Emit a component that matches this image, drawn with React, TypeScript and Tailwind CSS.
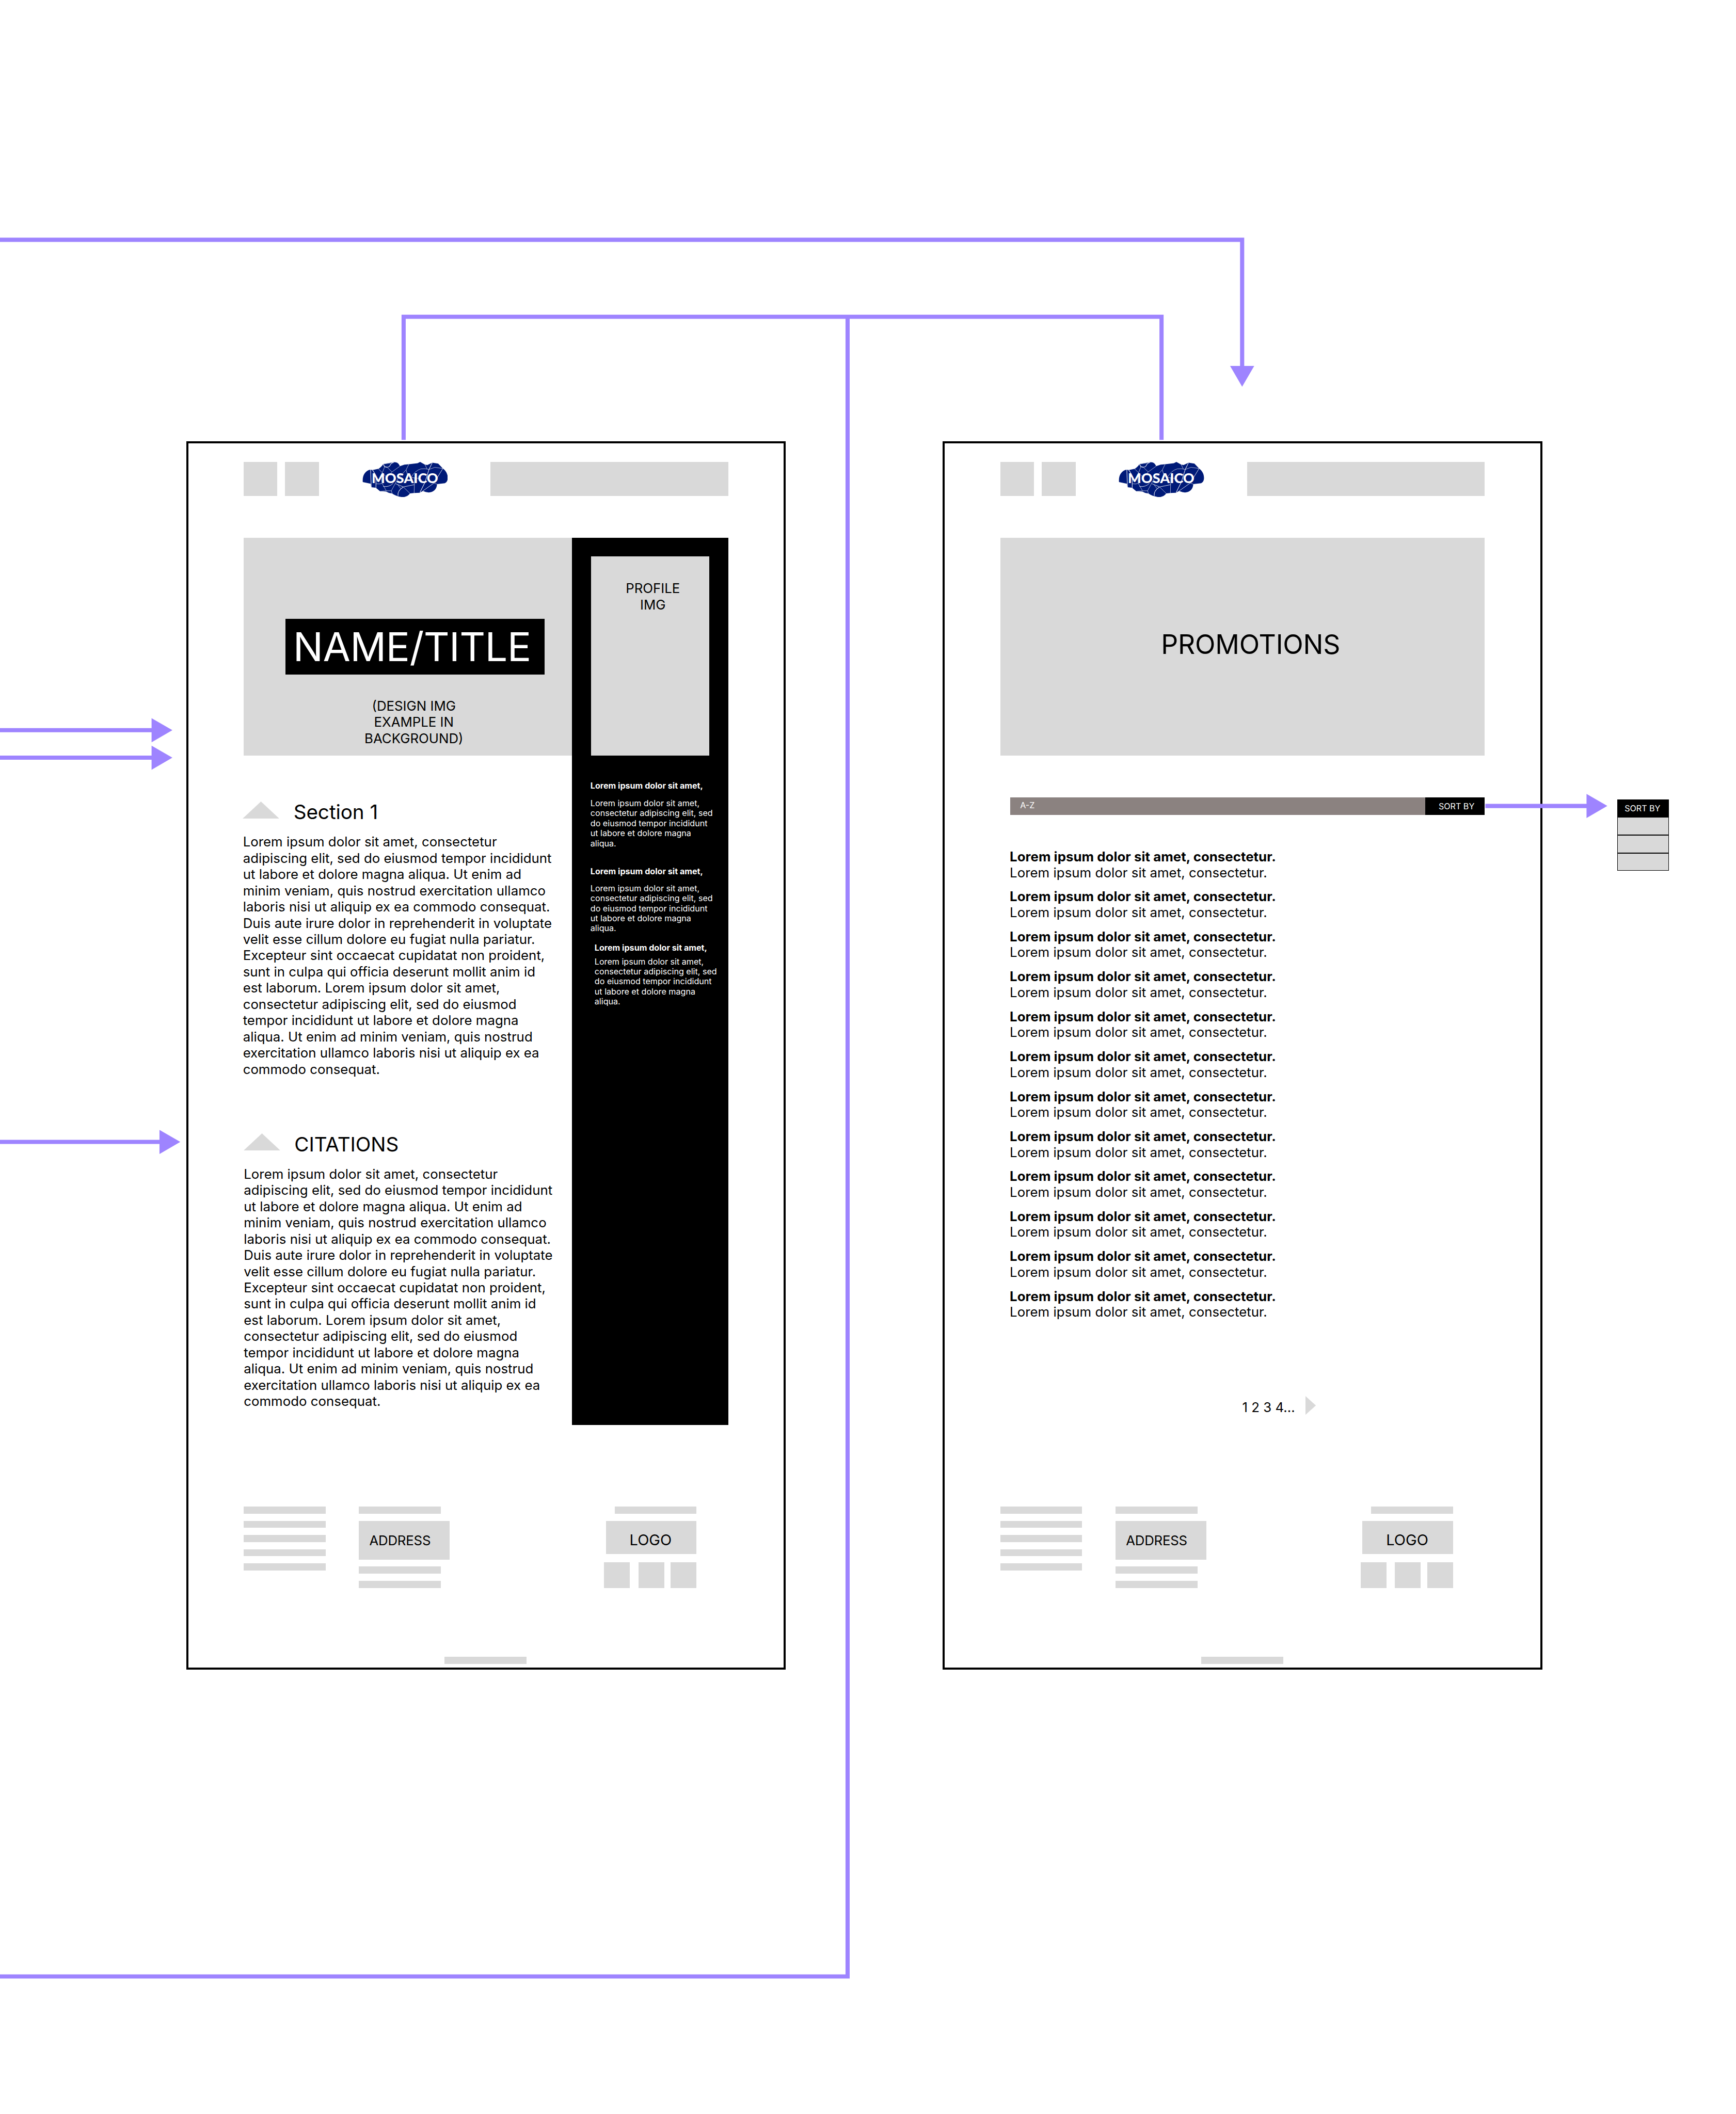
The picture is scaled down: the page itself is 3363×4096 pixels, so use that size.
import React from "react";

const BODY = [
  "Lorem ipsum dolor sit amet, consectetur",
  "adipiscing elit, sed do eiusmod tempor incididunt",
  "ut labore et dolore magna aliqua. Ut enim ad",
  "minim veniam, quis nostrud exercitation ullamco",
  "laboris nisi ut aliquip ex ea commodo consequat.",
  "Duis aute irure dolor in reprehenderit in voluptate",
  "velit esse cillum dolore eu fugiat nulla pariatur.",
  "Excepteur sint occaecat cupidatat non proident,",
  "sunt in culpa qui officia deserunt mollit anim id",
  "est laborum. Lorem ipsum dolor sit amet,",
  "consectetur adipiscing elit, sed do eiusmod",
  "tempor incididunt ut labore et dolore magna",
  "aliqua. Ut enim ad minim veniam, quis nostrud",
  "exercitation ullamco laboris nisi ut aliquip ex ea",
  "commodo consequat.",
].join("\n");

const NOTE = [
  "Lorem ipsum dolor sit amet,",
  "consectetur adipiscing elit, sed",
  "do eiusmod tempor incididunt",
  "ut labore et dolore magna",
  "aliqua.",
].join("\n");

function Logo() {
  return (
    <svg viewBox="90 58 615 254" className="-mt-0.5 ml-104 h-84.75 w-205 shrink-0" aria-label="Mosaico">
      <path
        fill="#001a78"
        d="M93 203 C88 155 112 120 148 114 L163 116 L207 107 Q226 96 241 73 L310 61 C338 56 352 68 360 89 L393 77 L425 75 L488 67 L506 58 L541 77 L558 80 L594 63 L636 70 L670 105 C696 124 706 150 705 176 C704 198 694 207 684 211 L628 218 C626 255 602 277 568 278 Q545 276 526 267 L502 280 L462 282 L433 285 C420 303 402 311 380 312 C350 308 325 300 304 285 Q284 286 262 272 L218 270 L187 244 L154 240 L150 215 Z"
      />
      <g fill="none" stroke="#e9ecf8" strokeWidth="2.6">
        <path d="M149 114 L154 240" strokeWidth="4" />
        <path d="M163 116 Q182 140 188 175 L188 244" strokeWidth="4" />
        <path d="M205 107 L262 165" />
        <path d="M241 73 L250 94 L233 138 Q222 175 232 212 L262 266" />
        <path d="M241 73 C248 100 275 102 288 86 Q296 66 318 61" strokeWidth="4" />
        <path d="M250 94 H266 L303 130 L360 89" />
        <path d="M241 73 L310 63" />
        <path d="M303 130 L285 150" />
        <path d="M425 75 L405 115 L345 180 L299 265 L304 285" />
        <path d="M405 115 L418 160 L440 170" />
        <path d="M440 170 Q470 120 512 108 Q545 104 570 112 L612 97 L670 105" />
        <path d="M541 77 L556 108" />
        <path d="M594 63 L570 112 L541 205 L505 277" strokeWidth="4" />
        <path d="M670 105 L606 210 L526 267" strokeWidth="3.4" />
        <path d="M606 210 L628 218" />
        <path d="M188 215 Q215 220 232 212" />
        <path d="M240 235 Q285 240 312 212" strokeWidth="3.4" />
        <path d="M262 266 H299" />
        <path d="M218 270 L262 266" />
        <path d="M330 215 L385 238 L464 222" strokeWidth="3.4" />
        <path d="M345 222 L365 248" />
        <path d="M385 238 C358 255 342 275 347 302" strokeWidth="4" />
        <path d="M385 238 L433 285" />
        <path d="M466 170 L463 282" />
        <path d="M440 170 L490 176 L520 190" />
      </g>
      <text
        x="157"
        y="209"
        fill="#ffffff"
        fontFamily="Lato, sans-serif"
        fontWeight="900"
        fontSize="97"
        textLength="479"
        lengthAdjust="spacingAndGlyphs"
      >
        MOSAICO
      </text>
    </svg>
  );
}

function Header() {
  return (
    <header className="ml-133 flex h-81 shrink-0 items-start">
      <div className="h-81 w-81 bg-[#d9d9d9]" />
      <div className="ml-19 h-81 w-81 bg-[#d9d9d9]" />
      <Logo />
      <div className="ml-103 h-81 w-571 bg-[#d9d9d9]" />
    </header>
  );
}

function Bar() {
  return <div className="h-17 w-197 shrink-0 bg-[#d9d9d9]" />;
}

function Footer() {
  return (
    <footer className="mt-auto h-386 shrink-0">
      <div className="ml-133 flex h-361 items-start">
        <div className="flex flex-col gap-17">
          <Bar />
          <Bar />
          <Bar />
          <Bar />
          <Bar />
        </div>
        <div className="ml-80 flex w-218 flex-col gap-17">
          <Bar />
          <div className="flex h-93 items-center bg-[#d9d9d9] pt-2 pl-25 text-[25.81px] leading-39 tracking-[-0.2px]">
            ADDRESS
          </div>
          <Bar />
          <Bar />
        </div>
        <div className="ml-371 flex w-222 flex-col items-end">
          <Bar />
          <div className="mt-17 flex h-80 w-218 items-center bg-[#d9d9d9] pt-12 pl-57 text-[29.04px] leading-44">
            LOGO
          </div>
          <div className="mt-19 flex w-222 items-start">
            <div className="h-62 w-62 bg-[#d9d9d9]" />
            <div className="mt-1 ml-20 h-62 w-62 bg-[#d9d9d9]" />
            <div className="ml-16 h-62 w-62 bg-[#d9d9d9]" />
          </div>
        </div>
      </div>
      <div className="ml-616">
        <Bar />
      </div>
    </footer>
  );
}

function Section({ title, className }: { title: string; className: string }) {
  return (
    <section className={className}>
      <div className="flex h-58 items-start">
        <svg viewBox="0 0 88 41" className="mt-3.5 h-41 w-88 shrink-0">
          <path d="M44 0 L88 41 H0 Z" fill="#d9d9d9" />
        </svg>
        <h2 className="ml-34 text-[38.72px] leading-58 tracking-[-0.1px] whitespace-nowrap">{title}</h2>
      </div>
      <p className="mt-23 ml-0.5 text-[25.81px] leading-39 tracking-[0.02px] whitespace-pre">{BODY}</p>
    </section>
  );
}

function Note({ className, bodyClass }: { className: string; bodyClass: string }) {
  return (
    <div className={className}>
      <h3 className="text-[16.13px] leading-24 font-bold whitespace-nowrap">Lorem ipsum dolor sit amet,</h3>
      <p className={bodyClass}>{NOTE}</p>
    </div>
  );
}

function ProfileFrame() {
  return (
    <div className="absolute top-1060 left-447 flex h-2950 w-1440 flex-col border-4 border-black pt-45">
      <Header />
      <div className="mt-101 ml-133 flex items-start">
        <div className="w-789">
          <div className="h-523 bg-[#d9d9d9] pt-195">
            <div className="ml-100 flex h-133 w-623 items-center bg-black pt-1 pl-19 text-[77.44px] leading-116 tracking-[-0.65px] whitespace-nowrap text-white">
              NAME/TITLE
            </div>
            <p className="mt-56 ml-200 w-418 text-center text-[25.81px] leading-39">
              (DESIGN IMG
              <br />
              EXAMPLE IN
              <br />
              BACKGROUND)
            </p>
          </div>
          <Section title="Section 1" className="mt-106.5 -ml-2" />
          <Section title="CITATIONS" className="mt-132" />
        </div>
        <aside className="h-2131 w-375 bg-black px-45 pt-45 text-white">
          <div className="h-478 w-285 bg-[#d9d9d9] pt-57 pl-13 text-center text-[25.81px] leading-39 text-black">
            PROFILE
            <br />
            IMG
          </div>
          <Note className="mt-61 -ml-1" bodyClass="mt-18 text-[16.13px] leading-24 whitespace-pre" />
          <Note className="mt-43 -ml-1" bodyClass="mt-17.5 text-[16.13px] leading-24 whitespace-pre" />
          <Note className="mt-22.5 ml-9" bodyClass="mt-9 text-[16.13px] leading-24 whitespace-pre" />
        </aside>
      </div>
      <Footer />
    </div>
  );
}

function PromotionsFrame() {
  return (
    <div className="absolute top-1060 left-2264 flex h-2950 w-1440 flex-col border-4 border-black pt-45">
      <Header />
      <div className="mt-101 ml-133 w-1164">
        <div className="h-523 bg-[#d9d9d9] pt-217 pl-386.5">
          <h1 className="text-[51.63px] leading-77 tracking-[-0.2px] whitespace-nowrap">PROMOTIONS</h1>
        </div>
        <div className="mt-100 ml-24 flex h-43 text-[16.13px] leading-24 text-white">
          <div className="w-997 bg-[#8b8280] pt-7.5 pl-24">A-Z</div>
          <div className="w-143 bg-black pt-10.5 pl-32 whitespace-nowrap">SORT BY</div>
        </div>
        <ul className="mt-81.25 ml-23 flex flex-col gap-20 text-[25.81px] leading-38 tracking-[0.04px] whitespace-nowrap">
          {Array.from({ length: 12 }, (_, i) => (
            <li key={i}>
              <p className="font-bold">Lorem ipsum dolor sit amet, consectetur.</p>
              <p>Lorem ipsum dolor sit amet, consectetur.</p>
            </li>
          ))}
        </ul>
        <div className="mt-181.75 ml-581.5 flex items-start">
          <span className="mt-8 w-151.5 text-[25.81px] leading-39 whitespace-nowrap">1 2 3 4...</span>
          <svg viewBox="0 0 25 45" className="h-45 w-25">
            <path d="M0 0 L25 22.5 L0 45 Z" fill="#d9d9d9" />
          </svg>
        </div>
      </div>
      <Footer />
    </div>
  );
}

function SortMenu() {
  return (
    <div className="absolute top-1920 left-3884 w-124">
      <div className="h-43 bg-black pt-10.5 pl-17.5 text-[16.13px] leading-24 whitespace-nowrap text-white">SORT BY</div>
      <div className="h-43 border border-black bg-[#d9d9d9]" />
      <div className="h-43 border border-black bg-[#d9d9d9]" />
      <div className="h-43 border border-black bg-[#d9d9d9]" />
    </div>
  );
}

function Connectors() {
  return (
    <svg viewBox="0 0 4169 5078" preserveAspectRatio="none" className="absolute inset-0 h-full w-full">
      <g fill="none" stroke="#9e84ff" strokeWidth="10">
        <path d="M0 576 H2983 V880" />
        <path d="M969.3 1056.5 V761 H2789.4 V1056.5" />
        <path d="M2035.5 761 V4747.5 H0" />
        <path d="M0 1754 H365" />
        <path d="M0 1820 H365" />
        <path d="M0 2743 H384" />
        <path d="M3567 1936 H3811" />
      </g>
      <g fill="#9e84ff">
        <path d="M2954 879 H3012 L2983 929 Z" />
        <path d="M364 1725 L414 1754 L364 1783 Z" />
        <path d="M364 1791 L414 1820 L364 1849 Z" />
        <path d="M383 2714 L433 2743 L383 2772 Z" />
        <path d="M3810 1907 L3860 1936 L3810 1965 Z" />
      </g>
    </svg>
  );
}

export default function App() {
  return (
    <main className="relative h-[4096px] w-[3363px] overflow-hidden bg-white font-['Inter',sans-serif] text-black [--spacing:0.80665px]">
      <ProfileFrame />
      <PromotionsFrame />
      <SortMenu />
      <Connectors />
    </main>
  );
}
